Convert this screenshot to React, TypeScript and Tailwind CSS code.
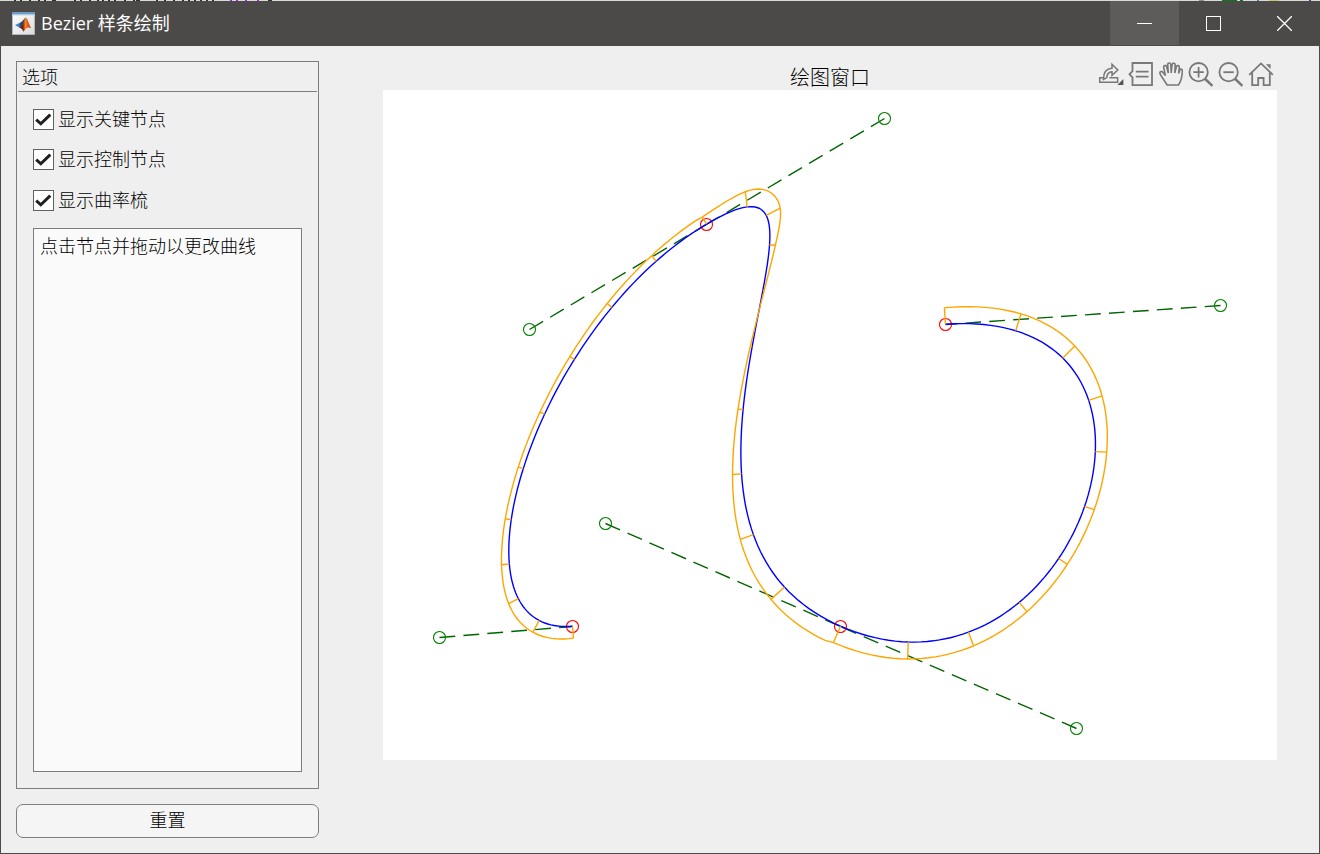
import React from "react";

type Pt = [number, number];

const segments: Pt[][] = [
  [[572.5, 626.5], [439.5, 637.5], [529.5, 329.5], [706.5, 224.5]],
  [[706.5, 224.5], [884.5, 118.5], [605.5, 523.5], [840.5, 626.5]],
  [[840.5, 626.5], [1076.5, 728.5], [1220.5, 305.5], [945.5, 324.5]],
];
const OX = 383;
const OY = 90;
const COMB_SCALE = 25;

function sample(seg: Pt[], t: number) {
  const u = 1 - t;
  const [p, q, r, s] = seg;
  const axis = (i: 0 | 1) => ({
    v: u * u * u * p[i] + 3 * u * u * t * q[i] + 3 * u * t * t * r[i] + t * t * t * s[i],
    d: u * u * (q[i] - p[i]) + 2 * u * t * (r[i] - q[i]) + t * t * (s[i] - r[i]),
    a: u * (r[i] - 2 * q[i] + p[i]) + t * (s[i] - 2 * r[i] + q[i]),
  });
  const x = axis(0);
  const y = axis(1);
  const n = Math.hypot(x.d, y.d);
  const k = (x.d * y.a - y.d * x.a) / n / COMB_SCALE;
  return {
    on: [x.v - OX, y.v - OY - 0.3] as Pt,
    off: [x.v + (k * y.d) / n - OX, y.v - (k * x.d) / n - OY - 0.3] as Pt,
  };
}

const samples = segments.flatMap((seg, i) =>
  Array.from({ length: i === 2 ? 101 : 100 }, (_, j) => sample(seg, j / 100)),
);
const toPoints = (pts: Pt[]) => pts.map((p) => p[0].toFixed(2) + "," + p[1].toFixed(2)).join(" ");
const curve = toPoints(samples.map((s) => s.on));
const comb = toPoints(samples.map((s) => s.off));
const teeth = samples.filter((_, i) => i % 10 === 0);
const handles: [Pt, Pt][] = segments.flatMap((s) => [
  [s[1], s[0]] as [Pt, Pt],
  [s[2], s[3]] as [Pt, Pt],
]);
const keys: Pt[] = [segments[0][0], segments[1][0], segments[2][0], segments[2][3]];

function Plot() {
  return (
    <svg width="894" height="670" viewBox="0 0 894 670" fill="none" className="block bg-white">
      {handles.map(([a, b], i) => (
        <line key={i} x1={a[0] - OX} y1={a[1] - OY} x2={b[0] - OX} y2={b[1] - OY} stroke="#006400" strokeWidth="1.4" strokeDasharray="15.8 8.2" />
      ))}
      {handles.map(([a], i) => (
        <circle key={i} cx={a[0] - OX} cy={a[1] - OY} r="6" stroke="#008000" strokeWidth="1.1" />
      ))}
      {keys.map((p, i) => (
        <circle key={i} cx={p[0] - OX} cy={p[1] - OY} r="6" stroke="#ff0000" strokeWidth="1.1" />
      ))}
      <polyline points={curve} stroke="#0000ff" strokeWidth="1.4" />
      <polyline points={comb} stroke="#ffa500" strokeWidth="1.4" />
      {teeth.map((s, i) => (
        <line key={i} x1={s.on[0]} y1={s.on[1]} x2={s.off[0]} y2={s.off[1]} stroke="#ffa500" strokeWidth="1.4" />
      ))}
    </svg>
  );
}

function MatlabLogo() {
  return (
    <svg width="23" height="23" viewBox="0 0 23 23" className="block">
      <defs>
        <linearGradient id="tile" x1="0" y1="0" x2="1" y2="1">
          <stop offset="0" stopColor="#ffffff" />
          <stop offset="1" stopColor="#dcdcdc" />
        </linearGradient>
        <linearGradient id="peak" x1="0" y1="0" x2="1" y2="0">
          <stop offset="0" stopColor="#5a1a14" />
          <stop offset="0.3" stopColor="#7a2118" />
          <stop offset="0.5" stopColor="#f08a24" />
          <stop offset="0.65" stopColor="#e8641c" />
          <stop offset="1" stopColor="#b0300f" />
        </linearGradient>
      </defs>
      <rect x="0.5" y="0.5" width="22" height="22" fill="url(#tile)" stroke="#b9bfc4" strokeWidth="0.8" />
      <rect width="23" height="2.6" fill="#6b9cc6" />
      <rect y="2.6" width="23" height="1" fill="#c9dced" />
      <path d="M3 13 L8 10.8 L10.3 12.9 L7.5 15.8 Z" fill="#3f86c6" />
      <path d="M8 10.8 C10.5 10.2 11.8 6.6 13.8 5.6 L10.3 12.9 L7.5 15.8 Z" fill="#27466e" />
      <path d="M13.8 5.6 C15.8 6.4 17 13 19.3 16.4 C16.5 14.5 14.2 16 11.5 19.8 C10.4 17.5 9.3 16 7.5 15.8 C10.3 14.5 11.6 8.4 13.8 5.6 Z" fill="url(#peak)" />
    </svg>
  );
}

function Check({ label }: { label: string }) {
  return (
    <label className="flex h-[22px] items-start gap-[4px]">
      <span className="flex size-[21px] items-center justify-center border border-[#616161] bg-white">
        <svg width="19" height="19" viewBox="0 0 19 19" fill="none">
          <path d="M2.2 9.6 L6.8 13.8 L16.3 4.6" stroke="#212121" strokeWidth="3" />
        </svg>
      </span>
      <span className="text-[18px] leading-[22px]">{label}</span>
    </label>
  );
}

function Toolbar() {
  const common = { viewBox: "0 0 30 30", fill: "none", stroke: "#787878", strokeWidth: 1.8, className: "block size-[30px]" };
  return (
    <div className="-ml-px flex h-[30px] w-[180px] shrink-0">
      <svg {...common}>
        <path d="M8 18.8 H3.7 V23.2 H21.6 V18.8 H13.4" strokeWidth="1.5" />
        <path d="M7.4 20.4 C7.4 13.5 10.4 9.6 16 9.2 V5.2 L21.8 11 L16 16.4 V12.8 C12.6 13 11 15.4 10.8 18.6 Z" strokeWidth="1.5" />
        <path d="M27.4 20 V26 H21.4 Z" fill="#555" stroke="none" />
      </svg>
      <svg {...common}>
        <path d="M6.5 4 H26 V26.2 H6.5 V18.4 L3.5 15.3 L6.5 12.2 Z M9.8 12.6 H22.6 M9.8 17.7 H22.6" />
      </svg>
      <svg {...common}>
        <path d="M11.2 26 C9 22.4 6 18.6 3.9 14.6 C3.4 12.2 5.8 12 7 13.6 L9.4 16.6 L7.6 8.2 C7.4 6 10 5.8 10.6 7.8 L12.3 14 L11.7 5.4 C11.8 3.5 14.4 3.5 14.8 5.4 L15.2 14 L16.1 5.4 C16.6 3.6 19.4 3.8 19.2 5.8 L18.8 14 L20.4 7.6 C21.2 6 23.5 6.4 23.3 8.4 L22.6 14.6 L23.9 11 C24.7 9.4 26.7 10 26.3 12 C26.2 17.4 25 22.4 22.4 26 Z" strokeWidth="1.6" />
      </svg>
      <svg {...common}>
        <circle cx="12.6" cy="13.2" r="9.2" />
        <path d="M7.4 13.2 H17.8 M12.6 8 V18.4" />
        <path d="M19.2 20 L26.4 26.8" strokeWidth="2.5" />
      </svg>
      <svg {...common}>
        <circle cx="12.6" cy="13.2" r="9.2" />
        <path d="M7.4 13.2 H17.8" />
        <path d="M19.2 20 L26.4 26.8" strokeWidth="2.5" />
      </svg>
      <svg {...common}>
        <path d="M3.2 15.8 L15 4.4 L26.8 15.8" />
        <path d="M6.2 13.6 V26.2 H12.2 V19 H17.6 V26.2 H23.8 V13.6" />
        <path d="M19.8 5.2 H24.6 V10 Z" fill="#787878" stroke="none" />
      </svg>
    </div>
  );
}

const dark = "#303030";
const purple = "#a020f0";
const backdrop: [number, number, string][] = [
  ...[14, 20, 29, 38, 44, 74, 80, 89, 97, 102, 108, 114, 124, 133, 156, 164, 173, 182, 188, 194, 200, 206, 212].map(
    (x) => [x, 2, dark] as [number, number, string],
  ),
  [52, 4, dark],
  [136, 4, dark],
  ...[230, 236, 245, 257].map((x) => [x, 2, purple] as [number, number, string]),
  [268, 4, dark],
  [1199, 5, "#8c8c8c"],
  [1222, 15, "#0a7a14"],
  [1240, 3, "#0a7a14"],
  [1257, 2, "#5a78a8"],
  [1269, 10, "#c8c47a"],
  [1309, 2, "#5a3c78"],
];

export default function App() {
  return (
    <div className="flex h-[854px] w-[1320px] flex-col overflow-hidden bg-[#4b4a48] font-['Liberation_Sans','Noto_Sans_CJK_SC',sans-serif] font-light text-black">
      <svg width="1320" height="1" className="block shrink-0 bg-[#d8dad8]">
        {backdrop.map(([x, w, c]) => (
          <rect key={x} x={x} width={w} height="1" fill={c} />
        ))}
      </svg>
      <header className="flex h-[45px] shrink-0 items-stretch text-white">
        <div className="flex flex-1 items-start gap-[6px] pl-[12px] pt-[11px]">
          <MatlabLogo />
          <h1 className="font-['Open_Sans','Noto_Sans_CJK_SC',sans-serif] text-[18px] leading-[22px] font-normal">Bezier 样条绘制</h1>
        </div>
        <button className="mb-px flex w-[69px] items-center justify-center bg-[#5d5c5a]" aria-label="Minimize">
          <span className="h-px w-[15px] bg-white" />
        </button>
        <button className="flex w-[69px] items-center justify-center" aria-label="Maximize">
          <span className="size-[15px] border border-white" />
        </button>
        <button className="flex w-[72px] items-center justify-center" aria-label="Close">
          <svg width="15" height="15" viewBox="0 0 15 15"><path d="M0 0 L15 15 M15 0 L0 15" stroke="white" strokeWidth="1.3" /></svg>
        </button>
      </header>
      <main className="mx-px mb-px flex flex-1 bg-[#efefef] pl-[15px] pt-[15px]">
        <aside className="flex w-[303px] flex-col">
          <section className="flex h-[728px] flex-col border border-[#7d7d7d]">
            <h2 className="mx-px h-[30px] border-b border-[#7d7d7d] pl-[4px] text-[18px] leading-[32px]">选项</h2>
            <div className="flex flex-col gap-[18px] px-[16px] pt-[17px]">
              <Check label="显示关键节点" />
              <Check label="显示控制节点" />
              <div className="pt-px"><Check label="显示曲率梳" /></div>
            </div>
            <div className="mx-[16px] mt-[16px] mb-[16px] flex-1 border border-[#7d7d7d] bg-[#fafafa] px-[6px] pt-[5px] text-[18px] leading-[27px]">点击节点并拖动以更改曲线</div>
          </section>
          <button className="mt-[15px] h-[34px] rounded-[7px] border border-[#7d7d7d] bg-[#f5f5f5] text-[18px] leading-[30px]">重置</button>
        </aside>
        <section className="ml-[64px] w-[894px]">
          <div className="-mt-[2px] flex h-[31px] items-start">
            <div className="w-[180px]" />
            <div className="w-[534px] text-center text-[20px] leading-[38px]">绘图窗口</div>
            <Toolbar />
          </div>
          <Plot />
        </section>
      </main>
    </div>
  );
}
